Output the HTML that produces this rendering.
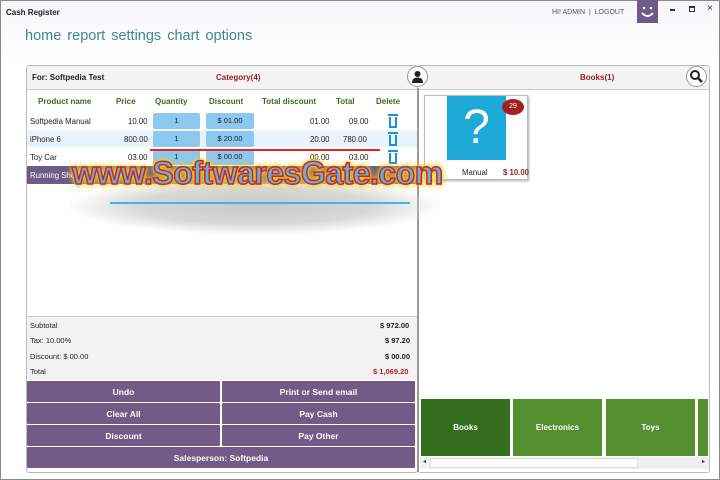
<!DOCTYPE html>
<html><head><meta charset="utf-8"><style>
*{margin:0;padding:0;box-sizing:border-box}
body{width:720px;height:480px;overflow:hidden;background:#fff;font-family:"Liberation Sans",sans-serif;position:relative;font-size:8px;color:#222}
.a{position:absolute}
.win{left:0;top:0;width:720px;height:480px;border:1px solid #8a8a8a;background:linear-gradient(#f6f5f8,#fff 60px)}
.nav{left:25px;top:28px;font-size:14.5px;color:#3f8a82;word-spacing:2px}
.btn{position:absolute;background:#735a87;color:#fff;font-weight:bold;font-size:8.5px;display:flex;align-items:center;justify-content:center;border-radius:1px}
.tile{position:absolute;top:399px;height:57px;width:89px;background:#54902f;color:#fff;font-weight:bold;font-size:8px;display:flex;align-items:center;justify-content:center}
.th{position:absolute;top:97px;font-weight:bold;color:#3d6b1f;font-size:8px}
.r{position:absolute;font-size:7.8px}
.bx{position:absolute;background:#8cc8ef;height:16px;text-align:center;line-height:16px;font-size:7.5px;border-radius:2px}
.trash{position:absolute;width:8px;height:11px;border:2px solid #1e8fd0;border-top:none;border-radius:0 0 1px 1px}
.trash:before{content:"";position:absolute;left:-3px;top:-3px;width:10px;height:2px;background:#1e8fd0}
.sm{position:absolute;font-size:7.5px}
</style></head><body>
<div class="a win"></div>
<div class="a" style="left:6px;top:8px;font-weight:bold;font-size:8px">Cash Register</div>
<div class="a nav">home report settings chart options</div>
<div class="a" style="left:552px;top:9px;font-size:7px;color:#555">HI! ADMIN &nbsp;|&nbsp; LOGOUT</div>
<div class="a" style="left:637px;top:0;width:21px;height:23px;background:#6d5a87"></div>
<svg class="a" style="left:637px;top:0" width="21" height="23"><circle cx="7" cy="8" r="1.3" fill="#fff"/><circle cx="14" cy="8" r="1.3" fill="#fff"/><path d="M5 13 Q10.5 19 16 13" stroke="#fff" stroke-width="2" fill="none"/></svg>
<div class="a" style="left:670px;top:9px;width:5px;height:1.5px;background:#333"></div>
<div class="a" style="left:689px;top:6px;width:6px;height:6px;border:1px solid #333;border-top-width:2px"></div>
<div class="a" style="left:707px;top:3px;font-size:10px;color:#333">×</div>

<!-- left panel -->
<div class="a" style="left:26px;top:65px;width:392px;height:408px;border:1px solid #bbb;border-radius:3px;background:#fff"></div>
<div class="a" style="left:27px;top:66px;width:390px;height:24px;background:#f4f4f4;border-bottom:1px solid #ccc"></div>
<div class="a" style="left:32px;top:73px;font-weight:bold;font-size:8px">For: Softpedia Test</div>
<div class="a" style="left:216px;top:73px;font-weight:bold;font-size:8px;color:#9b2024">Category(4)</div>

<!-- right panel -->
<div class="a" style="left:419px;top:65px;width:291px;height:408px;border:1px solid #bbb;border-left:none;border-radius:0 3px 3px 0"></div>
<div class="a" style="left:419px;top:66px;width:290px;height:24px;background:#f4f4f4;border-bottom:1px solid #ccc"></div>
<div class="a" style="left:417px;top:88px;width:2px;height:384px;background:#999"></div>
<div class="a" style="left:407px;top:66px;width:21px;height:21px;border-radius:50%;border:1px solid #999;background:#fff"></div>
<svg class="a" style="left:411px;top:70px" width="13" height="13"><circle cx="6.5" cy="4" r="3" fill="#222"/><path d="M1 13 Q1 7.5 6.5 7.5 Q12 7.5 12 13Z" fill="#222"/></svg>
<div class="a" style="left:580px;top:73px;font-weight:bold;font-size:8px;color:#9b2024">Books(1)</div>
<div class="a" style="left:686px;top:66px;width:21px;height:21px;border-radius:50%;border:1px solid #999;background:#fff"></div>
<svg class="a" style="left:689px;top:69px" width="15" height="15"><circle cx="6" cy="6" r="4" stroke="#222" stroke-width="2" fill="none"/><path d="M9 9 L13 13" stroke="#222" stroke-width="2.5"/></svg>
<div class="a" style="left:424px;top:95px;width:104px;height:85px;border:1px solid #bbb;box-shadow:1px 1px 2px #aaa;background:#fff"></div>
<div class="a" style="left:447px;top:96px;width:59px;height:64px;background:#1eaad8;color:#fff;font-size:48px;text-align:center;line-height:64px">?</div>
<div class="a" style="left:502px;top:99px;width:22px;height:16px;border-radius:50%;background:#a51f1f;color:#fff;font-size:7px;text-align:center;line-height:16px">29</div>
<div class="r" style="left:462px;top:168px">Manual</div>
<div class="r" style="left:503px;top:168px;color:#9b2024;font-weight:bold">$ 10.00</div>
<div class="tile" style="left:421px;background:#336e1f">Books</div>
<div class="tile" style="left:513px">Electronics</div>
<div class="tile" style="left:606px">Toys</div>
<div class="tile" style="left:698px;width:10px"></div>
<div class="a" style="left:420px;top:457px;width:289px;height:12px;background:#f0f0f0"></div>
<div class="a" style="left:430px;top:458px;width:208px;height:10px;background:#fff;border:1px solid #ddd"></div>
<div class="a" style="left:423px;top:458px;font-size:6px">◂</div>
<div class="a" style="left:702px;top:458px;font-size:6px">▸</div>

<div class="th" style="left:38px">Product name</div>
<div class="th" style="left:116px">Price</div>
<div class="th" style="left:155px">Quantity</div>
<div class="th" style="left:209px">Discount</div>
<div class="th" style="left:262px">Total discount</div>
<div class="th" style="left:336px">Total</div>
<div class="th" style="left:376px">Delete</div>

<div class="a" style="left:27px;top:130px;width:390px;height:17px;background:#e9f3fb"></div>
<div class="r" style="left:30px;top:117px">Softpedia Manual</div><div class="r" style="left:128px;top:117px">10.00</div>
<div class="bx" style="left:153px;top:113px;width:47px">1</div><div class="bx" style="left:206px;top:113px;width:48px">$ 01.00</div>
<div class="r" style="left:310px;top:117px">01.00</div><div class="r" style="left:349px;top:117px">09.00</div><div class="trash" style="left:389px;top:117px"></div>
<div class="r" style="left:30px;top:135px">iPhone 6</div><div class="r" style="left:124px;top:135px">800.00</div>
<div class="bx" style="left:153px;top:131px;width:47px">1</div><div class="bx" style="left:206px;top:131px;width:48px">$ 20.00</div>
<div class="r" style="left:310px;top:135px">20.00</div><div class="r" style="left:343px;top:135px">780.00</div><div class="trash" style="left:389px;top:135px"></div>
<div class="r" style="left:30px;top:153px">Toy Car</div><div class="r" style="left:128px;top:153px">03.00</div>
<div class="bx" style="left:153px;top:149px;width:47px">1</div><div class="bx" style="left:206px;top:149px;width:48px">$ 00.00</div>
<div class="r" style="left:310px;top:153px">00.00</div><div class="r" style="left:349px;top:153px">03.00</div><div class="trash" style="left:389px;top:153px"></div>
<div class="a" style="left:27px;top:166px;width:390px;height:18px;background:#6d5a87"></div>
<div class="r" style="left:30px;top:171px;color:#fff">Running Shoes</div>

<!-- watermark -->
<div class="a" style="left:70px;top:178px;width:370px;height:56px;background:radial-gradient(ellipse,#c8c8c8 0%,#d8d8d8 45%,rgba(255,255,255,0) 72%)"></div>
<div class="a" style="left:110px;top:202px;width:300px;height:2px;background:#3ab8ea"></div>
<div class="a" style="left:150px;top:149px;width:230px;height:2px;background:#e8231d"></div>
<div class="a" style="left:72px;top:155px;font-size:32px;font-weight:bold;color:#5ab4e6;letter-spacing:-0.5px;-webkit-text-stroke:1.5px #d4231b;text-shadow:0 0 2px #f7e225,0 0 4px #f7e225,0 0 6px #f7c51a,0 0 8px #f7c51a">www.SoftwaresGate.com</div>

<!-- summary -->
<div class="a" style="left:27px;top:316px;width:390px;height:64px;background:#f2f2f2;border-top:1px solid #ccc"></div>
<div class="sm" style="left:30px;top:321px">Subtotal</div><div class="sm" style="left:380px;top:321px;font-weight:bold">$ 972.00</div>
<div class="sm" style="left:30px;top:336px">Tax: 10.00%</div><div class="sm" style="left:385px;top:336px;font-weight:bold">$ 97.20</div>
<div class="sm" style="left:30px;top:352px">Discount: $ 00.00</div><div class="sm" style="left:385px;top:352px;font-weight:bold">$ 00.00</div>
<div class="sm" style="left:30px;top:367px">Total</div><div class="sm" style="left:373px;top:367px;font-weight:bold;color:#b0242a">$ 1,069.20</div>
<div class="btn" style="left:27px;top:381px;width:193px;height:21px">Undo</div>
<div class="btn" style="left:222px;top:381px;width:193px;height:21px">Print or Send email</div>
<div class="btn" style="left:27px;top:403px;width:193px;height:21px">Clear All</div>
<div class="btn" style="left:222px;top:403px;width:193px;height:21px">Pay Cash</div>
<div class="btn" style="left:27px;top:425px;width:193px;height:21px">Discount</div>
<div class="btn" style="left:222px;top:425px;width:193px;height:21px">Pay Other</div>
<div class="btn" style="left:27px;top:447px;width:388px;height:21px">Salesperson: Softpedia</div>
</body></html>
